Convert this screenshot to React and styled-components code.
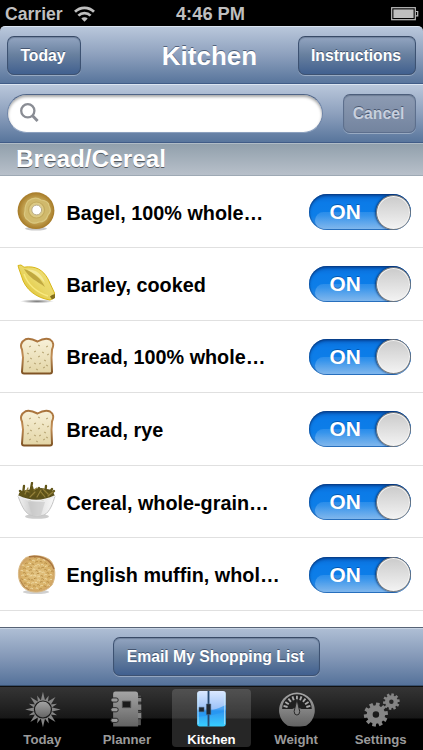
import { useState } from 'react';
import styled, { createGlobalStyle } from 'styled-components';

const GlobalStyle = createGlobalStyle`
  * {
    box-sizing: border-box;
  }

  body {
    margin: 0;
    background: #000;
    font-family: 'Liberation Sans', Arial, sans-serif;
    font-weight: bold;
  }

  button {
    font: inherit;
    margin: 0;
    padding: 0;
    border: 0;
    background: none;
  }

  svg {
    display: block;
  }
`;

const Screen = styled.div`
  width: 423px;
  height: 750px;
  display: flex;
  flex-direction: column;
  overflow: hidden;
  background: #000;
`;

const StatusBar = styled.div`
  height: 26px;
  flex: none;
  display: grid;
  grid-template-columns: 1fr auto 1fr;
  align-items: center;
  padding: 1px 4px 0 5px;
  color: #bfbfbf;
  font-size: 18.3px;
  line-height: 25px;
`;

const Clock = styled.span`
  margin-right: 3px;
`;

const Carrier = styled.div`
  display: flex;
  align-items: center;
  gap: 11px;
  padding-top: 1px;
  font-size: 17.6px;
  line-height: 24px;
`;

const Battery = styled.div`
  justify-self: end;
`;

const Bar = styled.div`
  flex: none;
  display: flex;
  align-items: center;
  background: linear-gradient(#b9c7db, #8da0bd 50%, #58759c);
  border-top: 1px solid #dbe5f1;
  border-bottom: 1px solid #405c87;
`;

const NavBar = styled(Bar)`
  height: 58px;
  padding: 1px 7px 0;
  display: grid;
  grid-template-columns: 1fr auto 1fr;
  border-radius: 5px 5px 0 0;

  button:last-child {
    justify-self: end;
  }
`;

const Title = styled.h1`
  margin: 0 4px 0 0;
  font-size: 26px;
  line-height: 32px;
  color: #fff;
  text-shadow: 0 -1px 0 rgba(40, 55, 80, 0.65);
`;

const BarButton = styled.button`
  width: ${({ $width }) => $width}px;
  height: 39px;
  padding-right: 2px;
  border: 1px solid ${({ $muted }) => ($muted ? '#5d6f8d' : '#3d5272')};
  border-top-color: ${({ $muted }) => ($muted ? '#4d5e7b' : '#384a66')};
  border-radius: 7px;
  color: ${({ $muted }) => ($muted ? '#c8d0de' : '#fff')};
  font-size: 15.75px;
  line-height: 37px;
  text-shadow: 0 -1px 0 rgba(35, 48, 72, 0.6);
  background: ${({ $muted }) =>
    $muted ? 'linear-gradient(#8d9bb3, #73849f)' : 'linear-gradient(#93a5c1, #68809f 48%, #41608f)'};
  box-shadow:
    0 1px 0 rgba(255, 255, 255, 0.32),
    inset 0 1px 1px rgba(30, 45, 70, 0.28);
`;

const SearchBar = styled(Bar)`
  height: 59px;
  padding: 0 7px 1px;
  justify-content: space-between;
`;

const SearchField = styled.label`
  width: 316px;
  height: 39px;
  display: flex;
  align-items: center;
  padding-left: 12px;
  border: 1px solid #6d83a6;
  border-top-color: #4f6486;
  border-bottom-color: #8ba0be;
  border-radius: 20px;
  background: #fff;
  box-shadow: inset 0 2px 3px rgba(0, 0, 0, 0.35);

  input {
    width: 270px;
    margin-left: 6px;
    border: 0;
    outline: 0;
    background: transparent;
    font: inherit;
    font-size: 18px;
  }
`;

const SectionHeader = styled.h2`
  flex: none;
  height: 33px;
  margin: 0;
  padding-left: 16px;
  background: linear-gradient(#91a0ac, #b8c0ca);
  border-top: 1px solid #b0bcc6;
  border-bottom: 1px solid #9ea9b4;
  color: #fff;
  font-size: 24.3px;
  line-height: 30px;
  text-shadow: 0 1px 0 rgba(0, 0, 0, 0.5);
`;

const List = styled.ul`
  flex: 1;
  min-height: 0;
  margin: 0;
  padding: 0;
  list-style: none;
  overflow: hidden;
  background: #fff;
`;

const Row = styled.li`
  height: 72.6px;
  display: flex;
  align-items: center;
  padding: 1px 12px 0 17px;
  border-bottom: 1px solid #e0e0e0;

  &:first-child {
    height: 72px;
  }
`;

const FoodName = styled.span`
  flex: 1;
  margin: 1px 0 0 9.5px;
  color: #000;
  font-size: 19.8px;
  line-height: 26px;
  white-space: nowrap;
`;

const Track = styled.button`
  position: relative;
  width: 102px;
  height: 36px;
  display: flex;
  align-items: center;
  justify-content: space-between;
  flex-direction: ${({ $on }) => ($on ? 'row' : 'row-reverse')};
  padding: 0 0 0 20.5px;
  border-radius: 18px;
  overflow: hidden;
  color: #fff;
  font-size: 20.8px;
  line-height: 38px;
  text-shadow: 0 -1px 0 rgba(0, 50, 120, 0.5);
  background: linear-gradient(#0a6cd6, #0b7be8 25%, #0d7ee8 60%, #3b8fe2);
  box-shadow:
    inset 0 2px 3px rgba(0, 30, 90, 0.55),
    inset 0 0 0 1px rgba(20, 80, 150, 0.45);

  /* glossy lower half */
  &::before {
    content: '';
    position: absolute;
    left: 6px;
    right: 0;
    bottom: 1px;
    height: 17px;
    border-radius: 14px 0 0 14px;
    background: linear-gradient(rgba(255, 255, 255, 0.12), rgba(255, 255, 255, 0.36));
  }

  span {
    position: relative;
  }
`;

const Knob = styled.span`
  width: 35px;
  height: 35px;
  border: 1px solid #777;
  border-radius: 50%;
  background: linear-gradient(#cbcbcb, #f3f3f3);
  box-shadow:
    -1px 0 2px rgba(0, 20, 60, 0.6),
    inset 0 0 0 1px #f5f5f5;
`;

const Toolbar = styled(Bar)`
  height: 59px;
  justify-content: center;
  padding: 0 0 0 10px;
  background: linear-gradient(#afbfd5, #8599b8 50%, #55729a);
  border-top-color: #576376;
  border-bottom-color: #37506f;
  box-shadow: inset 0 1px 0 #c7d3e3;
`;

const TabBar = styled.nav`
  flex: none;
  height: 64px;
  display: flex;
  align-items: flex-start;
  background: linear-gradient(#353535, #171717 31px, #000 32px);
  border-top: 1px solid #111;
`;

const TabSlot = styled.div`
  flex: 1;
  display: flex;
  justify-content: center;
`;

const Tab = styled.button`
  width: 79px;
  height: 58px;
  margin-top: 2px;
  display: flex;
  flex-direction: column;
  align-items: center;
  padding-top: 2px;
  border-radius: 4px;
  background: ${({ $active }) => ($active ? 'rgba(255, 255, 255, 0.15)' : 'none')};
  color: ${({ $active }) => ($active ? '#fff' : '#9a9a9a')};
  font-size: 13.2px;
  line-height: 15px;

  svg {
    margin-bottom: 4px;
  }
`;

function WifiIcon() {
  return (
    <svg width="21" height="16" viewBox="0 0 21 16">
      <g fill="none" stroke="#bfbfbf" strokeWidth="2.7">
        <path d="M1 5.8a13.4 13.4 0 0 1 19 0" />
        <path d="M4.4 9.6a8.6 8.6 0 0 1 12.2 0" />
      </g>
      <path d="M7.3 12.6a4.5 4.5 0 0 1 6.4 0L10.5 15.8z" fill="#bfbfbf" />
    </svg>
  );
}

function BatteryIcon() {
  return (
    <svg width="28" height="14" viewBox="0 0 28 14">
      <rect x=".7" y=".7" width="23.6" height="12" fill="none" stroke="#bfbfbf" strokeWidth="1.2" />
      <rect x="2.4" y="2.4" width="20.2" height="8.6" fill="#bfbfbf" />
      <path d="M24.7 4.5h2v4.4h-2" fill="none" stroke="#bfbfbf" strokeWidth="1.2" />
    </svg>
  );
}

function SearchIcon() {
  return (
    <svg width="19" height="20" viewBox="0 0 19 20" fill="none" stroke="#8a8d94">
      <circle cx="7.8" cy="7.8" r="6.6" strokeWidth="2.3" />
      <path d="M12.3 12.5 17.6 18" strokeWidth="2.9" />
    </svg>
  );
}

function Bagel() {
  return (
    <svg width="40" height="40" viewBox="0 0 40 40">
      <defs>
        <radialGradient id="bagel">
          <stop offset=".25" stopColor="#d3bd70" />
          <stop offset=".65" stopColor="#c4a453" />
          <stop offset="1" stopColor="#a67a27" />
        </radialGradient>
      </defs>
      <ellipse cx="19" cy="36.6" rx="11" ry="2" fill="#c9c9c9" />
      <circle cx="19" cy="18.7" r="18.4" fill="url(#bagel)" />
      <path
        d="M11 9q7-5 13-1 8 1 8 6 3 5-1 9-2 7-9 7-7 3-11-2-5-3-3-9 0-6 3-10z"
        fill="#d0b96c"
        stroke="#dac880"
        strokeWidth="1.2"
      />
      <circle cx="19.5" cy="18" r="8" fill="#dcca85" stroke="#c3aa5c" strokeWidth="1.2" />
      <circle cx="19.7" cy="18" r="4.9" fill="#fff" stroke="#b7aa88" />
    </svg>
  );
}

function Barley() {
  return (
    <svg width="40" height="40" viewBox="0 0 40 40">
      <defs>
        <linearGradient id="barley" x1="1" x2="0" y1="0" y2="1">
          <stop stopColor="#f3e27a" />
          <stop offset=".5" stopColor="#e9d766" />
          <stop offset="1" stopColor="#dcb81b" />
        </linearGradient>
        <radialGradient id="barleyShade">
          <stop stopColor="#777" />
          <stop offset="1" stopColor="#fff" />
        </radialGradient>
      </defs>
      <ellipse cx="20" cy="37.3" rx="17" ry="2" fill="url(#barleyShade)" />
      <path
        d="M1 1.5 4 1 7 3.2C19 1.5 26 6 31 15l6.5 14-.5 5-4 2C20 34 8 26 4.5 12L2 5z"
        fill="url(#barley)"
        stroke="#d8b719"
      />
      <path d="M7 5C17 8 24 15 28 23 20 17 12 14 7 5" fill="#b9a03a" opacity=".85" />
      <path d="M10 5.5C19 5 25 10 28 19 22 13 17 9 10 5.5z" fill="#f4e998" />
      <path d="M7 10c4 11 12 18 24 22" fill="none" stroke="#f8e97f" strokeWidth="1.4" />
      <path d="m33 32.5 2-1.5 3-1v4l-3 1.5z" fill="#85701c" />
    </svg>
  );
}

const crumbs = [
  [13, 10], [22, 8], [30, 10], [11, 16], [18, 15], [26, 15], [31, 18],
  [14, 21], [22, 20], [28, 23], [11, 25], [18, 26], [23, 27], [30, 28],
  [13, 31], [20, 32], [27, 31],
];

function Bread() {
  return (
    <svg width="40" height="40" viewBox="0 0 40 40">
      <defs>
        <linearGradient id="bread" x2="0" y2="1">
          <stop stopColor="#f8f1d9" />
          <stop offset="1" stopColor="#e3d5a6" />
        </linearGradient>
        <linearGradient id="crust" x2="0" y2="1">
          <stop stopColor="#a9743d" />
          <stop offset=".5" stopColor="#c08d55" />
          <stop offset="1" stopColor="#805425" />
        </linearGradient>
      </defs>
      <path
        d="M8.5 2.3c4-1.4 8 .2 12 2.2C25 2 29 1 33 2.5c3.500 2 4 6 2 10l-.5 8 .5 14c0 1.5-.8 2-2 2H7c-1.3 0-2-.5-2-2l1-14-1-8C3 9 4 4.5 8.5 2.3z"
        fill="url(#bread)"
        stroke="url(#crust)"
        strokeWidth="2"
      />
      {crumbs.map(([x, y], i) => (
        <path key={i} d={`M${x - 0.8} ${y}l1.600 ${i % 2 ? 1 : -1}`} stroke="#b8a676" strokeWidth="1.1" />
      ))}
    </svg>
  );
}

function Cereal() {
  return (
    <svg width="40" height="40" viewBox="0 0 40 40">
      <defs>
        <linearGradient id="bowl">
          <stop stopColor="#f4f4f4" />
          <stop offset=".35" stopColor="#d0d0d0" />
          <stop offset=".65" stopColor="#e6e6e6" />
          <stop offset="1" stopColor="#fafafa" />
        </linearGradient>
      </defs>
      <ellipse cx="20" cy="34.5" rx="12" ry="2.3" fill="#ccc" />
      <path d="M1 14c3 8 6 16 12 19 4 1.5 10 1.5 14 0 6-3 9-12 11-19z" fill="url(#bowl)" stroke="#c5c5c5" />
      <path d="M11 20 15 33h9l4-13z" fill="#c4c4c4" opacity=".55" />
      <path d="M1 14q18 10 37 0L35 8 30 7l-6-1-7 1-8 1-6 2z" fill="#5a501b" />
      <path d="M1 14q18 9 37 0" fill="none" stroke="#ededed" strokeWidth="1.5" />
      <g stroke="#625619" strokeWidth="2.3" strokeLinecap="round">
        <path d="m6 12 1-8M9 13 3 9M13 12 15 1M17 13l-2-8M19 12l3-6M25 13l-3-5M28 12l1-8M31 13l4-6M34 12l3-3M10 14l-7-2" />
      </g>
      <g stroke="#94813a" strokeWidth="1.2" strokeLinecap="round">
        <path d="m8 12 3-6M13 15l5-5M20 15l4-7M28 15l-4-5M31 12l-5-5M12 10l-4-1M31 14l5-4M17 8l3-2" />
      </g>
    </svg>
  );
}

// short strokes scattered over the top of the muffin
const pores = Array.from({ length: 72 }, (_, i) => {
  const r = 16.5 * Math.sqrt((i + 0.5) / 72);
  const a = i * 2.39996;
  return [19.5 + r * Math.cos(a), 19 + r * Math.sin(a)];
});

function Muffin() {
  return (
    <svg width="40" height="40" viewBox="0 0 40 40">
      <defs>
        <radialGradient id="muffin">
          <stop stopColor="#e3c483" />
          <stop offset=".8" stopColor="#d9b268" />
          <stop offset="1" stopColor="#cfa365" />
        </radialGradient>
      </defs>
      <ellipse cx="19" cy="37" rx="13" ry="2" fill="#d0d0d0" />
      <path
        d="M9 2.5C17-.5 27 .5 33 5c6 6 6 18 2 25-7 8-21 10-29 2-7-8-6-23 3-29.5z"
        fill="url(#muffin)"
        stroke="#dabb87"
      />
      <path d="M12 1.8C24-.5 34 5 37 14" fill="none" stroke="#a8753f" strokeWidth="1.4" />
      <path d="M3 25q3 7 9 10" fill="none" stroke="#b2854b" />
      {pores.map(([x, y], i) => (
        <path
          key={i}
          d={`M${x - 1.3} ${y}q1.3-1 2.6 ${i % 3 ? 0.6 : -0.6}`}
          fill="none"
          stroke={i % 2 ? '#f0dca8' : '#b68c46'}
          strokeWidth="1"
        />
      ))}
    </svg>
  );
}

function GrayFill({ id }) {
  return (
    <linearGradient id={id} x2="0" y2="1">
      <stop stopColor="#a5a5a5" />
      <stop offset="1" stopColor="#626262" />
    </linearGradient>
  );
}

function SunIcon() {
  return (
    <svg width="40" height="40" viewBox="0 0 40 40">
      <defs><GrayFill id="sun" /></defs>
      <g transform="translate(1 0)">
        {Array.from({ length: 16 }, (_, i) => (
          <path
            key={i}
            d={i % 2 ? 'M18 11 20 3.5l2 7.5z' : 'M17.5 11 20 .8l2.5 10.2z'}
            fill="#858585"
            transform={`rotate(${i * 22.5} 20 20)`}
          />
        ))}
        <circle cx="20" cy="20" r="9.2" fill="url(#sun)" stroke="#1b1b1b" strokeWidth="1.3" />
      </g>
    </svg>
  );
}

function PlannerIcon() {
  return (
    <svg width="40" height="40" viewBox="0 0 40 40">
      <defs><GrayFill id="book" /></defs>
      <path d="M30 5h5v32h-5z" fill="#555" />
      <path d="M31 7h5v5h-5zM31 14h5v7h-5zM31 23h5v7h-5z" fill="#858585" stroke="#222" />
      <path d="M5 3Q5 .5 7.500 .5H29q3 0 3 3.500v34.500H5z" fill="url(#book)" />
      <path d="M15 11h9v7h-9z" fill="#1b1b1b" stroke="#4d4d4d" />
      {[7.5, 18, 29.5].map((y) => (
        <rect key={y} x="2.5" y={y} width="8" height="4.5" rx="2.2" fill="#999" stroke="#252525" />
      ))}
    </svg>
  );
}

function FridgeIcon() {
  return (
    <svg width="40" height="40" viewBox="0 0 40 40">
      <defs>
        <linearGradient id="fridge" x2="0" y2="1">
          <stop stopColor="#dbe8ff" />
          <stop offset=".5" stopColor="#9cc2f8" />
          <stop offset=".56" stopColor="#3295f0" />
          <stop offset="1" stopColor="#37cfff" />
        </linearGradient>
      </defs>
      <rect x="5" y="0" width="31" height="38.5" rx="3" fill="url(#fridge)" />
      <path d="M5 24Q22 22 36 15v7Q22 27 5 28z" fill="#2495f1" opacity=".65" />
      <path d="M6 2v34M34.8 2v34" stroke="#c8efff" opacity=".8" />
      <path d="M17.3 0v38.5" stroke="#26486f" strokeWidth="2" />
      <path d="M15 14h4.8v11.5H15zM7 17.5h5.5v5H7z" fill="#202832" stroke="#4f6b89" strokeWidth=".5" />
    </svg>
  );
}

function WeightIcon() {
  return (
    <svg width="40" height="40" viewBox="0 0 40 40">
      <defs><GrayFill id="scale" /></defs>
      <path d="M11 37.5A19.3 19.3 0 1 1 31 37.5Q28 38.3 21 38.3T11 37.5z" fill="url(#scale)" />
      <path d="M5 19.5a16 16 0 0 1 32 0H26q-5-3-10 0z" fill="#202020" />
      <g stroke="#aaa" strokeWidth="2">
        {[-75, -57, -38, -19, 0, 19, 38, 57, 75].map((angle) => (
          <path key={angle} d="M21 5v4.5" transform={`rotate(${angle} 21 20)`} />
        ))}
      </g>
      <path d="M18 22 21 9l3 13q0 4-3 4t-3-4z" fill="#858585" stroke="#222" />
    </svg>
  );
}

function Gear({ cx, cy, r, teeth }) {
  return (
    <g fill="none" stroke="#858585">
      <circle cx={cx} cy={cy} r={r * 0.52} strokeWidth={r * 0.5} />
      {Array.from({ length: teeth }, (_, i) => (
        <path
          key={i}
          d={`M${cx} ${cy - r * 0.68}V${cy - r}`}
          strokeWidth={r * 0.31}
          transform={`rotate(${(i * 360) / teeth + 10} ${cx} ${cy})`}
        />
      ))}
    </g>
  );
}

function SettingsIcon() {
  return (
    <svg width="40" height="40" viewBox="0 0 40 40">
      <Gear cx={14.5} cy={25.5} r={13} teeth={10} />
      <Gear cx={31.2} cy={11.5} r={9} teeth={10} />
    </svg>
  );
}

const foods = [
  { name: 'Bagel, 100% whole…', Icon: Bagel },
  { name: 'Barley, cooked', Icon: Barley },
  { name: 'Bread, 100% whole…', Icon: Bread },
  { name: 'Bread, rye', Icon: Bread },
  { name: 'Cereal, whole-grain…', Icon: Cereal },
  { name: 'English muffin, whol…', Icon: Muffin },
];

const tabs = [
  { label: 'Today', Icon: SunIcon },
  { label: 'Planner', Icon: PlannerIcon },
  { label: 'Kitchen', Icon: FridgeIcon },
  { label: 'Weight', Icon: WeightIcon },
  { label: 'Settings', Icon: SettingsIcon },
];

function FoodRow({ name, Icon }) {
  const [on, setOn] = useState(true);

  return (
    <Row>
      <Icon />
      <FoodName>{name}</FoodName>
      <Track $on={on} role="switch" aria-checked={on} aria-label={name} onClick={() => setOn(!on)}>
        <span>{on ? 'ON' : 'OFF'}</span>
        <Knob />
      </Track>
    </Row>
  );
}

export default function App() {
  const [activeTab, setActiveTab] = useState('Kitchen');

  return (
    <>
      <GlobalStyle />
      <Screen>
        <StatusBar>
          <Carrier>
            Carrier
            <WifiIcon />
          </Carrier>
          <Clock>4:46 PM</Clock>
          <Battery>
            <BatteryIcon />
          </Battery>
        </StatusBar>
        <NavBar>
          <BarButton $width={74}>Today</BarButton>
          <Title>Kitchen</Title>
          <BarButton $width={118}>Instructions</BarButton>
        </NavBar>
        <SearchBar>
          <SearchField>
            <SearchIcon />
            <input type="text" aria-label="Search" />
          </SearchField>
          <BarButton $width={73} $muted>Cancel</BarButton>
        </SearchBar>
        <SectionHeader>Bread/Cereal</SectionHeader>
        <List>
          {foods.map((food) => (
            <FoodRow key={food.name} {...food} />
          ))}
        </List>
        <Toolbar>
          <BarButton $width={207}>Email My Shopping List</BarButton>
        </Toolbar>
        <TabBar>
          {tabs.map(({ label, Icon }) => (
            <TabSlot key={label}>
              <Tab $active={activeTab === label} onClick={() => setActiveTab(label)}>
                <Icon />
                {label}
              </Tab>
            </TabSlot>
          ))}
        </TabBar>
      </Screen>
    </>
  );
}
